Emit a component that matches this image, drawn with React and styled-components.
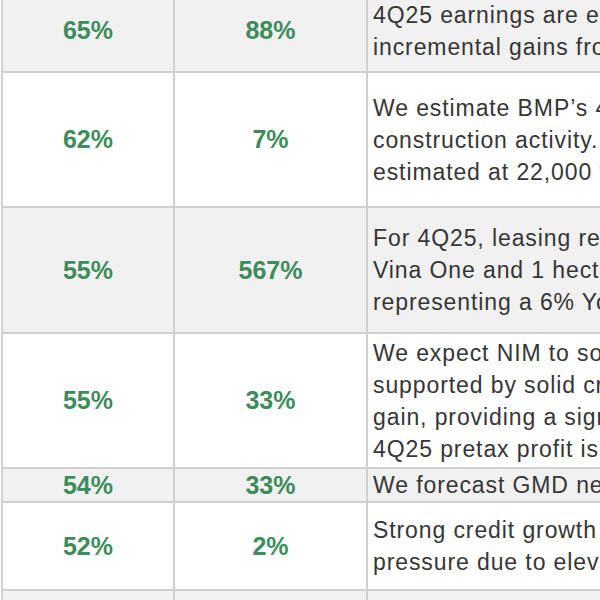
import React from "react";
import styled, { createGlobalStyle } from "styled-components";

const GlobalStyle = createGlobalStyle`
  html, body {
    margin: 0;
    padding: 0;
    background: #ffffff;
    overflow: hidden;
  }
`;

const rows = [
  {
    h: 83,
    a: "65%",
    b: "88%",
    lines: [
      "4Q25 earnings are expected to grow on",
      "incremental gains from new contracts",
    ],
  },
  {
    h: 135,
    a: "62%",
    b: "7%",
    lines: [
      "We estimate BMP’s 4Q25 volume to rise",
      "construction activity. Output is",
      "estimated at 22,000 tons for the quarter",
    ],
  },
  {
    h: 126,
    a: "55%",
    b: "567%",
    lines: [
      "For 4Q25, leasing revenue comes from",
      "Vina One and 1 hectare of industrial land,",
      "representing a 6% YoY increase",
    ],
  },
  {
    h: 135,
    a: "55%",
    b: "33%",
    lines: [
      "We expect NIM to soften slightly, while",
      "supported by solid credit growth and a",
      "gain, providing a significant boost.",
      "4Q25 pretax profit is forecast to rise",
    ],
  },
  {
    h: 34,
    a: "54%",
    b: "33%",
    lines: ["We forecast GMD net profit to grow"],
  },
  {
    h: 88,
    a: "52%",
    b: "2%",
    lines: [
      "Strong credit growth offsets margin",
      "pressure due to elevated funding costs",
    ],
  },
  { h: 40, a: "", b: "", lines: [] },
];

function App() {
  return (
    <>
      <GlobalStyle />
      <Sheet>
        {rows.map((r, i) => (
          <Row key={i} $h={r.h} $shaded={i % 2 === 0}>
            <NumCell>{r.a}</NumCell>
            <NumCell>{r.b}</NumCell>
            <TextCell>
              {r.lines.map((l, j) => (
                <Line key={j}>{l}</Line>
              ))}
            </TextCell>
          </Row>
        ))}
      </Sheet>
    </>
  );
}

const Sheet = styled.div`
  margin-top: -10px;
  margin-left: 1px;
  width: 599px;
  overflow: hidden;
  border-left: 2px solid #d2d2d2;
  font-family: "Liberation Sans", Arial, sans-serif;
`;

const Row = styled.div`
  display: grid;
  grid-template-columns: 172px 193px 1fr;
  box-sizing: border-box;
  height: ${(p) => p.$h}px;
  background: ${(p) => (p.$shaded ? "#f1f1f1" : "#ffffff")};
  border-bottom: 2px solid #cfcfcf;
`;

const NumCell = styled.div`
  display: flex;
  align-items: center;
  justify-content: center;
  border-right: 2px solid #d0d0d0;
  font-size: 25px;
  font-weight: bold;
  color: #3d8c5b;
`;

const TextCell = styled.div`
  display: flex;
  flex-direction: column;
  justify-content: center;
  min-width: 0;
  padding-left: 5px;
  overflow: hidden;
  font-size: 23px;
  letter-spacing: 0.9px;
  line-height: 32px;
  color: #363636;
`;

const Line = styled.div`
  white-space: nowrap;
`;

export default App;
